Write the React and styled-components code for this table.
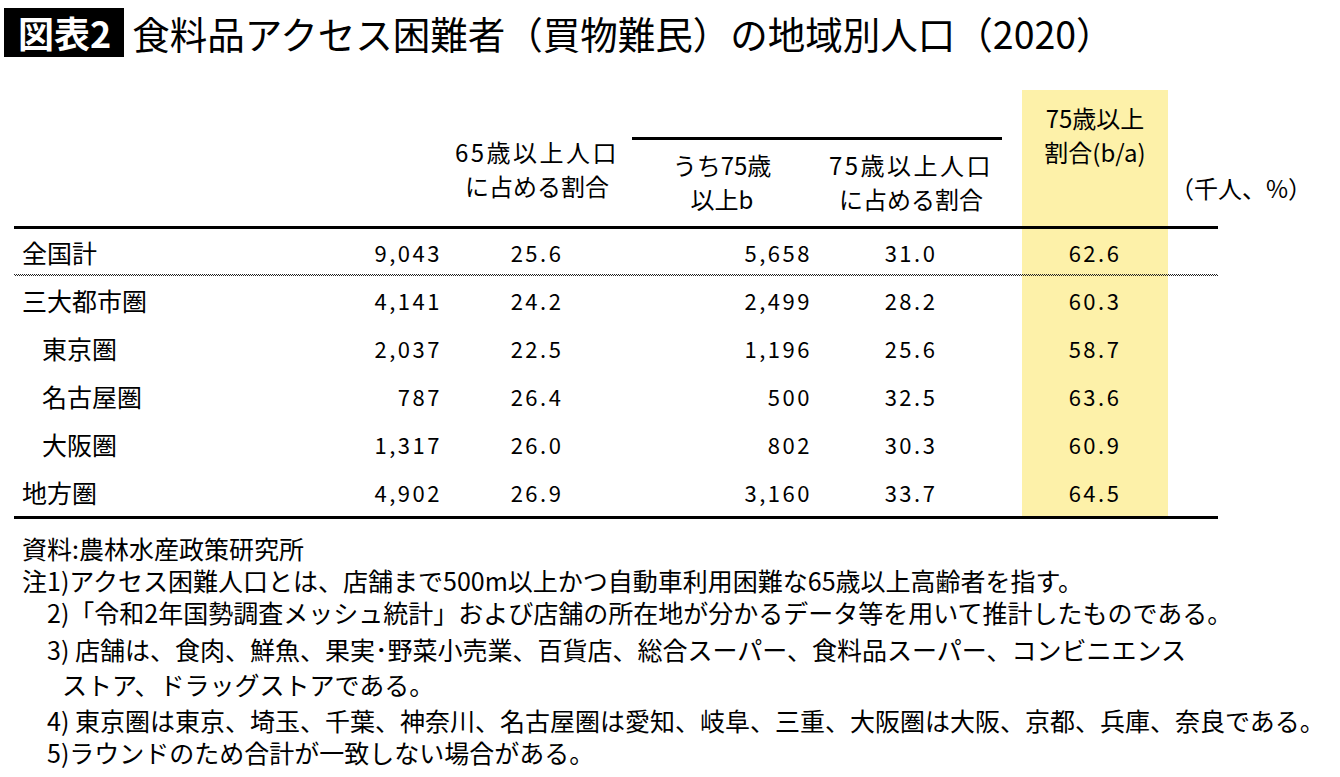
import React from 'react';
import styled, { createGlobalStyle } from 'styled-components';

const GlobalStyle = createGlobalStyle`
  body {
    margin: 0;
    background: #fff;
    color: #000;
    font-family: "Noto Sans CJK JP", "Noto Sans", sans-serif;
  }
`

const Page = styled.div`
  width: 1340px;
  height: 777px;
  overflow: hidden;
  box-sizing: border-box;
  padding: 8px 0 0 4px;
`

const TitleRow = styled.div`
  display: flex;
  align-items: center;
  gap: 8px;
`

const Badge = styled.div`
  background: #000;
  color: #fff;
  font-size: 36px;
  font-weight: 700;
  height: 49px;
  line-height: 49px;
  padding: 0 13px 0 14px;
`

const Title = styled.h1`
  margin: 0;
  font-size: 37.5px;
  font-weight: 400;
  line-height: 49px;
  white-space: nowrap;
`

const Table = styled.div`
  display: grid;
  grid-template-columns: 316px 122px 170px 200px 178px 22px 146px 50px;
  grid-template-rows: 47px 3px 86px 3px 45px 2px repeat(5, 48px) 3px;
  margin: 33px 0 0 10px;
  width: 1204px;
`

const Highlight = styled.div`
  grid-column: 7;
  grid-row: 1 / 12;
  background: #fdf1a9;
`

const Rule = styled.div`
  grid-row: ${p => p.$row};
  grid-column: ${p => p.$col || '1 / -1'};
  background: #000;
`

const ShortRule = styled(Rule)`
  margin: 0 -2px 0 10px;
`

const DottedRule = styled.div`
  grid-row: ${p => p.$row};
  grid-column: 1 / -1;
  background-image:
    repeating-linear-gradient(90deg, #222 0 1px, transparent 1px 2px),
    repeating-linear-gradient(90deg, transparent 0 1px, #222 1px 2px);
  background-size: 100% 1px, 100% 1px;
  background-position: top left, bottom left;
  background-repeat: no-repeat;
`

const HeadCell = styled.div`
  grid-column: ${p => p.$col};
  grid-row: ${p => p.$row};
  align-self: ${p => p.$top ? 'start' : 'end'};
  padding: ${p => p.$top ? '11px 0 0' : `0 0 ${p.$bottom}px`};
  text-align: center;
  font-size: 24px;
  line-height: 34px;
  white-space: nowrap;
`

const Wide = styled.span`
  letter-spacing: 2.5px;
`

const Unit = styled.div`
  grid-column: 8;
  grid-row: 1 / 4;
  align-self: end;
  padding-bottom: 21px;
  margin-left: 2px;
  font-size: 24px;
  line-height: 34px;
  white-space: nowrap;
`

const Label = styled.div`
  grid-column: 1;
  grid-row: ${p => p.$row};
  display: flex;
  align-items: center;
  padding-left: ${p => p.$indent ? 28 : 8}px;
  font-size: 25px;
`

const Num = styled.div`
  grid-column: ${p => p.$col};
  grid-row: ${p => p.$row};
  display: flex;
  align-items: center;
  justify-content: ${p => p.$right ? 'flex-end' : 'center'};
  padding-right: ${p => p.$right ? 10 : 0}px;
  font-size: 22px;
  letter-spacing: 2.5px;
`

const Notes = styled.div`
  margin: 13px 0 0 18px;
  font-size: 25px;
  white-space: nowrap;
`

const Note = styled.div`
  line-height: ${p => p.$tall ? 35 : 32}px;
  margin-top: ${p => p.$gap || 0}px;
  padding-left: ${p => p.$hang ? 40 : p.$sub ? 25 : 0}px;
  text-indent: ${p => p.$hang ? -15 : 0}px;
`

const rows = [
  { label: '全国計', a: '9,043', r65: '25.6', b: '5,658', r75: '31.0', ba: '62.6' },
  { label: '三大都市圏', a: '4,141', r65: '24.2', b: '2,499', r75: '28.2', ba: '60.3' },
  { label: '東京圏', indent: true, a: '2,037', r65: '22.5', b: '1,196', r75: '25.6', ba: '58.7' },
  { label: '名古屋圏', indent: true, a: '787', r65: '26.4', b: '500', r75: '32.5', ba: '63.6' },
  { label: '大阪圏', indent: true, a: '1,317', r65: '26.0', b: '802', r75: '30.3', ba: '60.9' },
  { label: '地方圏', a: '4,902', r65: '26.9', b: '3,160', r75: '33.7', ba: '64.5' },
];

const App = () => {
  return (
    <Page>
      <GlobalStyle />
      <TitleRow>
        <Badge>図表2</Badge>
        <Title>食料品アクセス困難者（買物難民）の地域別人口（2020）</Title>
      </TitleRow>

      <Table>
        <Highlight />

        <HeadCell $col={3} $row="1 / 4" $bottom={23}>
          <Wide>65歳以上人口</Wide><br />に占める割合
        </HeadCell>
        <ShortRule $row={2} $col="4 / 6" />
        <HeadCell $col={4} $row={3} $bottom={10}>
          うち75歳<br />以上b
        </HeadCell>
        <HeadCell $col={5} $row={3} $bottom={10}>
          <Wide>75歳以上人口</Wide><br />に占める割合
        </HeadCell>
        <HeadCell $col={7} $row="1 / 4" $top>
          75歳以上<br />割合(b/a)
        </HeadCell>
        <Unit>（千人、%）</Unit>

        <Rule $row={4} />

        {rows.map((r, i) => {
          const row = i === 0 ? 5 : 6 + i;
          return (
            <React.Fragment key={r.label}>
              <Label $row={row} $indent={r.indent}>{r.label}</Label>
              <Num $row={row} $col={2} $right>{r.a}</Num>
              <Num $row={row} $col={3}>{r.r65}</Num>
              <Num $row={row} $col={4} $right>{r.b}</Num>
              <Num $row={row} $col={5}>{r.r75}</Num>
              <Num $row={row} $col={7}>{r.ba}</Num>
            </React.Fragment>
          );
        })}

        <DottedRule $row={6} />
        <Rule $row={12} />
      </Table>

      <Notes>
        <Note>資料:農林水産政策研究所</Note>
        <Note>注1)アクセス困難人口とは、店舗まで500m以上かつ自動車利用困難な65歳以上高齢者を指す。</Note>
        <Note $sub>2)「令和2年国勢調査メッシュ統計」および店舗の所在地が分かるデータ等を用いて推計したものである。</Note>
        <Note $hang $tall $gap={4}>
          3) 店舗は、食肉、鮮魚、果実･野菜小売業、百貨店、総合スーパー、食料品スーパー、コンビニエンス<br />
          ストア、ドラッグストアである。
        </Note>
        <Note $sub $gap={2}>4) 東京圏は東京、埼玉、千葉、神奈川、名古屋圏は愛知、岐阜、三重、大阪圏は大阪、京都、兵庫、奈良である。</Note>
        <Note $sub>5)ラウンドのため合計が一致しない場合がある。</Note>
      </Notes>
    </Page>
  );
}

export default App;
